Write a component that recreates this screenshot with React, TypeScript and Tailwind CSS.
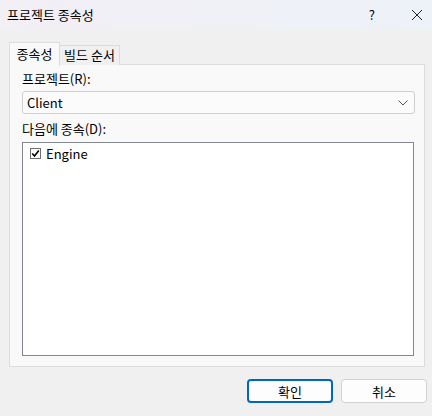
import React from "react";

const font = { fontFamily: '"Noto Sans CJK KR", "Noto Sans", sans-serif' };

function Chevron() {
  return (
    <svg width="10" height="6" viewBox="0 0 10 6" fill="none">
      <path d="M0.5 0.5 L5 5 L9.5 0.5" stroke="#555" strokeWidth="1" />
    </svg>
  );
}

export default function App() {
  return (
    <div
      className="w-[432px] h-[416px] bg-[#f0f0f0] text-[13px] text-black flex flex-col overflow-hidden"
      style={font}
    >
      {/* title bar */}
      <div className="h-[29px] shrink-0 flex items-center bg-gradient-to-r from-[#f2eff5] to-[#edf2f8] pl-[7px]">
        <span className="leading-none">프로젝트 종속성</span>
        <span className="ml-auto mr-[37px] text-[13px] leading-none">?</span>
        <svg width="10" height="10" viewBox="0 0 10 10" className="mr-[10px]">
          <path d="M0 0 L10 10 M10 0 L0 10" stroke="#222" strokeWidth="1" />
        </svg>
      </div>

      {/* tabs */}
      <div className="mt-[13px] ml-[9px] flex items-end h-[24px] relative z-10 -mb-[2px]">
        <div className="w-[51px] h-[24px] bg-[#f9f9f9] border border-b-0 border-[#dcdcdc] flex items-start justify-center pt-[3px] leading-[16px]">
          종속성
        </div>
        <div className="w-[60px] h-[20px] bg-[#f0f0f0] border border-l-0 border-b-0 border-[#dcdcdc] flex items-start justify-center pt-[1px] leading-[16px] mb-[1px]">
          빌드 순서
        </div>
      </div>

      {/* panel */}
      <div className="ml-[9px] w-[416px] h-[303px] border border-[#dcdcdc] bg-[#f9f9f9] pl-[12px] pt-[6px] flex flex-col">
        <div className="leading-[16px]">프로젝트(R):</div>
        <div className="mt-[4px] w-[393px] h-[23px] border border-[#cfcfcf] rounded-[3px] bg-[#fbfbfb] flex items-center pl-[4px] pr-[6px]">
          <span className="leading-none">Client</span>
          <span className="ml-auto">
            <Chevron />
          </span>
        </div>
        <div className="mt-[7px] leading-[16px]">다음에 종속(D):</div>
        <div className="mt-[5px] w-[392px] h-[214px] border border-[#828790] bg-white pt-[4px] pl-[7px]">
          <div className="flex items-center gap-[4px] h-[12px]">
            <div className="w-[11px] h-[11px] border border-[#707070] bg-white flex items-center justify-center">
              <svg width="9" height="9" viewBox="0 0 9 9">
                <path d="M1.2 4.5 L3.5 7 L7.8 1.5" stroke="#000" strokeWidth="1.6" fill="none" />
              </svg>
            </div>
            <span className="leading-none ml-[1px]">Engine</span>
          </div>
        </div>
      </div>

      {/* buttons */}
      <div className="mt-[12px] flex justify-end gap-[8px] pr-[5px]">
        <button className="w-[86px] h-[24px] rounded-[4px] border-2 border-[#0067c0] bg-[#fdfdfd] leading-none">
          확인
        </button>
        <button className="w-[86px] h-[24px] rounded-[4px] border border-[#d0d0d0] bg-[#fdfdfd] leading-none">
          취소
        </button>
      </div>
    </div>
  );
}
